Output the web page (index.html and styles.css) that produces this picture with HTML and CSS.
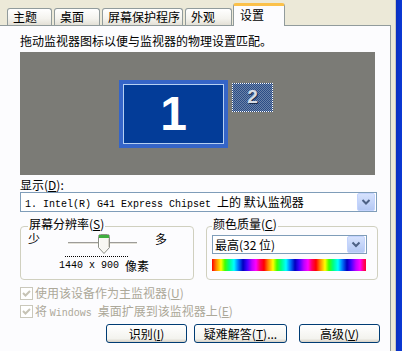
FILE: index.html
```html
<!DOCTYPE html>
<html>

<head>
  <title>显示 属性</title>
  <link rel="stylesheet" href="styles.css">
</head>

<body>
  <div class="window">
    <div class="dialog">
      <div class="tabs">
        <div class="tab tab-theme">主题</div>
        <div class="tab tab-desk">桌面</div>
        <div class="tab tab-saver">屏幕保护程序</div>
        <div class="tab tab-look">外观</div>
        <div class="tab tab-active">设置</div>
      </div>

      <div class="page">
        <div class="hint">拖动监视器图标以便与监视器的物理设置匹配。</div>

        <div class="monitors">
          <div class="monitor-main">
            <div class="monitor-inner">1</div>
          </div>
          <div class="monitor-second">2</div>
        </div>

        <div class="label">显示(<u>D</u>):</div>
        <div class="select select-display">
          <span class="select-text"><span class="mono">1. Intel(R) G41 Express Chipset </span>上的 默认监视器</span>
          <span class="select-arrow">
            <svg width="16" height="16" viewBox="0 0 16 16">
              <polyline points="4.5,6 8,9.5 11.5,6" fill="none" stroke="#4d6185" stroke-width="2" />
            </svg>
          </span>
        </div>

        <div class="groups">
          <div class="group group-res">
            <div class="group-title">屏幕分辨率(<u>S</u>)</div>
            <div class="slider-row">
              <span class="slider-end">少</span>
              <div class="slider">
                <div class="track"></div>
                <svg class="thumb" width="12" height="20" viewBox="0 0 12 20">
                  <path d="M0.5,2.5 Q0.5,0.5 2.5,0.5 H9.5 Q11.5,0.5 11.5,2.5 V13.5 L6,19.5 L0.5,13.5 Z" fill="#f7f7f2" stroke="#8c8f86" />
                  <rect x="1" y="1" width="10" height="3" fill="#3fae3f" />
                  <path d="M1.5,4.5 V13" stroke="#ffffff" />
                  <path d="M10.5,4.5 V13.2" stroke="#d6d3c8" />
                </svg>
              </div>
              <span class="slider-end slider-more">多</span>
            </div>
            <div class="ticks"></div>
            <div class="res-text"><span class="res-num">1440 x 900</span>像素</div>
          </div>

          <div class="group group-color">
            <div class="group-title">颜色质量(<u>C</u>)</div>
            <div class="select select-color">
              <span class="select-text">最高(32 位)</span>
              <span class="select-arrow">
                <svg width="16" height="15" viewBox="0 0 16 15">
                  <polyline points="4.5,5.5 8,9 11.5,5.5" fill="none" stroke="#4d6185" stroke-width="2" />
                </svg>
              </span>
            </div>
            <div class="spectrum"></div>
          </div>
        </div>

        <div class="check check-first">
          <span class="box">
            <svg width="11" height="11" viewBox="0 0 11 11">
              <polyline points="2,5 4.5,7.5 9,3" fill="none" stroke="#c6c3b5" stroke-width="2" />
            </svg>
          </span>
          <span>使用该设备作为主监视器(<u>U</u>)</span>
        </div>
        <div class="check">
          <span class="box">
            <svg width="11" height="11" viewBox="0 0 11 11">
              <polyline points="2,5 4.5,7.5 9,3" fill="none" stroke="#c6c3b5" stroke-width="2" />
            </svg>
          </span>
          <span>将 <span class="mono">Windows </span>桌面扩展到该监视器上(<u>E</u>)</span>
        </div>

        <div class="buttons">
          <button class="btn btn-identify">识别(<u>I</u>)</button>
          <button class="btn btn-help">疑难解答(<u>T</u>)...</button>
          <button class="btn btn-advanced">高级(<u>V</u>)</button>
        </div>
      </div>
    </div>
    <div class="frame-edge"></div>
  </div>
</body>

</html>
```

FILE: styles.css
```css
body {
  margin: 0;
  background-color: #ece9d8;
  font-family: "Noto Sans CJK SC", sans-serif;
  font-size: 12px;
  line-height: 14px;
  color: #000;
}

u {
  text-decoration: underline;
}

.mono {
  font-family: "Liberation Mono", "Noto Sans CJK SC", monospace;
  font-size: 10px;
  line-height: 10px;
}

.window {
  display: flex;
  height: 351px;
  overflow: hidden;
}

.dialog {
  width: 395px;
  background-color: #ece9d8;
}

.frame-edge {
  flex: 1;
  border-left: 1px solid #c8c6bc;
  background: linear-gradient(90deg, #0a2fbf, #0b3ad6);
}

/* tabs */

.tabs {
  display: flex;
  align-items: flex-end;
  gap: 2px;
  height: 25px;
  padding-left: 7px;
}

.tab {
  box-sizing: border-box;
  height: 17px;
  padding-left: 5px;
  line-height: 16px;
  border: 1px solid #919b9c;
  border-bottom: none;
  border-radius: 3px 3px 0 0;
  background: linear-gradient(#ffffff, #f4f3ee 60%, #e3e0d6);
  white-space: nowrap;
}

.tab-theme {
  width: 45px;
}

.tab-desk {
  width: 46px;
}

.tab-saver {
  width: 81px;
}

.tab-look {
  width: 47px;
}

.tab-active {
  position: relative;
  z-index: 1;
  width: 52px;
  height: 23px;
  margin-left: -1px;
  margin-bottom: -1px;
  padding-left: 6px;
  padding-top: 1px;
  border-top: 3px solid #fbc14a;
  background: #fcfcfe;
}

/* page */

.page {
  box-sizing: border-box;
  width: 391px;
  height: 326px;
  padding: 8px 0 0 20px;
  border-top: 1px solid #919b9c;
  border-right: 1px solid #919b9c;
  background-color: #fcfcfe;
}

.hint {
  height: 14px;
}

.monitors {
  display: flex;
  align-items: flex-start;
  gap: 4px;
  box-sizing: border-box;
  width: 355px;
  height: 123px;
  margin-top: 4px;
  padding: 28px 0 0 99px;
  background-color: #7b7b76;
}

.monitor-main {
  box-sizing: border-box;
  width: 109px;
  height: 68px;
  padding: 4px;
  background-color: #3565c8;
}

.monitor-inner {
  box-sizing: border-box;
  height: 100%;
  border: 1px solid #b6d0f2;
  background-color: #033c98;
  color: #fff;
  font-family: "Liberation Sans", sans-serif;
  font-weight: bold;
  font-size: 48px;
  line-height: 58px;
  text-align: center;
}

.monitor-second {
  box-sizing: border-box;
  width: 41px;
  height: 29px;
  margin-top: 3px;
  border: 1px dotted #ffffff;
  background: repeating-conic-gradient(#2c4d86 0 25%, #6a82a8 0 50%) 0 0 / 2px 2px;
  color: #d8dde6;
  font-family: "Liberation Sans", sans-serif;
  font-weight: bold;
  font-size: 19px;
  line-height: 26px;
  text-align: center;
  text-shadow: 1px 1px 0 #1b2c4c;
}

.label {
  height: 14px;
  margin-top: 3px;
}

/* dropdowns */

.select {
  display: flex;
  align-items: center;
  box-sizing: border-box;
  border: 1px solid #7f9db9;
  background-color: #fff;
}

.select-display {
  width: 357px;
  height: 20px;
  padding-left: 4px;
}

.select-color {
  width: 155px;
  height: 19px;
  margin: 4px 0 0 5px;
  padding-left: 2px;
}

.select-text {
  flex: 1;
  white-space: nowrap;
}

.select-arrow {
  display: flex;
  margin-right: 1px;
  border: 1px solid #c3d3fd;
  border-radius: 2px;
  background: linear-gradient(#d6e2fd, #b4c8f4);
}

.select-arrow svg {
  display: block;
}

/* group boxes */

.groups {
  display: flex;
  height: 54px;
  margin-top: 14px;
}

.group {
  box-sizing: border-box;
  border: 1px solid #d0d0bf;
  border-radius: 4px;
}

.group-res {
  width: 174px;
  padding-left: 7px;
}

.group-color {
  width: 172px;
  margin-left: 12px;
}

.group-title {
  width: max-content;
  height: 14px;
  margin-top: -10px;
  padding: 0 1px;
  background-color: #fcfcfe;
}

.group-color .group-title {
  margin-left: 5px;
}

.slider-row {
  display: flex;
  align-items: flex-start;
  height: 22px;
}

.slider-end {
  margin-top: 1px;
}

.slider {
  position: relative;
  width: 69px;
  height: 22px;
  margin-left: 28px;
}

.track {
  position: absolute;
  left: 0;
  right: 0;
  top: 11px;
  height: 1px;
  border-top: 1px solid #9d9c99;
  border-bottom: 1px solid #ffffff;
  background-color: #e3e1d8;
}

.thumb {
  position: absolute;
  left: 30px;
  top: 3px;
}

.slider-more {
  margin-left: 18px;
}

.ticks {
  width: 63px;
  margin: 3px 0 0 37px;
  border-top: 1px dotted #000;
}

.res-text {
  display: flex;
  justify-content: flex-end;
  height: 14px;
  margin-top: 2px;
  padding-right: 44px;
  white-space: nowrap;
}

.res-num {
  flex: none;
  margin-right: 6px;
  font-family: "Liberation Mono", monospace;
  font-size: 10px;
}

.spectrum {
  width: 154px;
  height: 12px;
  margin: 5px 0 0 5px;
  background: repeating-linear-gradient(90deg,
      #ff0000 0, #ff8000 4px, #ffff00 9px, #40ff00 13px, #00ff80 17px,
      #00ffff 22px, #0080ff 26px, #0000c0 31px, #4000ff 35px, #c000ff 40px,
      #ff00ff 44px, #ff0060 48px, #ff0000 52px);
}

/* checkboxes */

.check {
  display: flex;
  align-items: center;
  height: 14px;
  margin-top: 4px;
  color: #aca899;
  white-space: nowrap;
}

.check-first {
  margin-top: 6px;
}

.box {
  display: flex;
  align-items: center;
  justify-content: center;
  box-sizing: border-box;
  width: 13px;
  height: 13px;
  margin-right: 2px;
  border: 1px solid #cac8bb;
  background-color: #fff;
}

/* buttons */

.buttons {
  display: flex;
  margin-top: 6px;
  padding-left: 86px;
}

.btn {
  box-sizing: border-box;
  height: 19px;
  padding: 0;
  border: 1px solid #003c74;
  border-radius: 3px;
  background: linear-gradient(#ffffff, #f3f3ee 80%, #d6d0c5);
  font-family: "Noto Sans CJK SC", sans-serif;
  font-size: 12px;
  line-height: 15px;
  color: #000;
}

.btn-identify {
  width: 81px;
}

.btn-help {
  width: 93px;
  margin-left: 7px;
}

.btn-advanced {
  width: 81px;
  margin-left: 12px;
}
```
